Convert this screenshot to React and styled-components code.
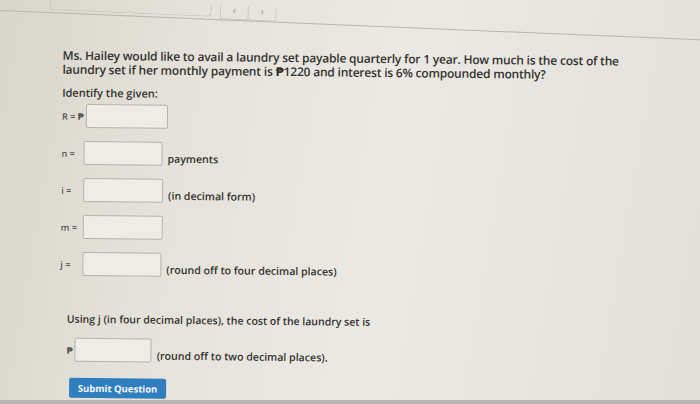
import React from 'react'
import styled, { createGlobalStyle } from 'styled-components'

const Global = createGlobalStyle`
    html, body {
        margin: 0;
        padding: 0;
        width: 700px;
        height: 404px;
        overflow: hidden;
    }
    body {
        font-family: "Open Sans", "DejaVu Sans", sans-serif;
        color: #34332f;
    }
`

const givens = [
    { label: 'R = ₱', width: 80, note: '' },
    { label: 'n =', width: 77, note: 'payments' },
    { label: 'i =', width: 78, note: '(in decimal form)' },
    { label: 'm =', width: 78, note: '' },
    { label: 'j =', width: 77, note: '(round off to four decimal places)' },
]

const App = () => {
    return (
        <Screen>
            <Global />
            <Toolbar>
                <SearchBox />
                <Pager>
                    <PagerButton>‹</PagerButton>
                    <PagerButton>›</PagerButton>
                </Pager>
            </Toolbar>
            <Question>
                <Prompt>
                    Ms. Hailey would like to avail a laundry set payable quarterly for 1 year. How much is the cost of the
                    laundry set if her monthly payment is ₱1220 and interest is 6% compounded monthly?
                </Prompt>
                <Heading>Identify the given:</Heading>
                <Givens>
                    {givens.map(g => (
                        <Row key={g.label}>
                            <Label $wide>{g.label}</Label>
                            <Field style={{ width: g.width }} />
                            {g.note && <Note>{g.note}</Note>}
                        </Row>
                    ))}
                </Givens>
                <Answer>
                    <Sentence>Using j (in four decimal places), the cost of the laundry set is</Sentence>
                    <Row>
                        <Label>₱</Label>
                        <Field style={{ width: 75 }} />
                        <Note>(round off to two decimal places).</Note>
                    </Row>
                    <Submit>Submit Question</Submit>
                </Answer>
            </Question>
            <Bezel />
        </Screen>
    )
}

const Screen = styled.div`
    position: relative;
    width: 700px;
    height: 404px;
    overflow: hidden;
    display: flex;
    flex-direction: column;
    background: linear-gradient(100deg, #d8d5cb 0%, #e4e2da 25%, #ebe9e3 55%, #e2e0da 100%);
`
const Toolbar = styled.div`
    display: flex;
    gap: 8px;
    height: 14px;
    padding: 0 0 0 50px;
    border-bottom: 1px solid #b8b6ae;
    transform-origin: left top;
    transform: rotate(2.4deg) translateY(-4px);
    width: 720px;
`
const SearchBox = styled.div`
    width: 160px;
    height: 11px;
    border: 1px solid #c9c7c0;
    border-top: none;
    border-radius: 0 0 4px 4px;
`
const Pager = styled.div`
    display: flex;
    border: 1px solid #c9c7c0;
    border-top: none;
    border-radius: 0 0 3px 3px;
    height: 13px;
`
const PagerButton = styled.span`
    width: 27px;
    text-align: center;
    font-size: 11px;
    line-height: 8px;
    color: #9a9893;
    & + & {
        border-left: 1px solid #c9c7c0;
    }
`
const Question = styled.div`
    padding: 33px 0 0 63px;
    transform-origin: left top;
    transform: rotate(0.6deg);
`
const Prompt = styled.p`
    margin: 0;
    width: 600px;
    font-size: 12px;
    font-weight: 600;
    line-height: 14px;
    letter-spacing: -0.2px;
`
const Heading = styled.p`
    margin: 8px 0 0;
    font-size: 11px;
    font-weight: 600;
`
const Givens = styled.div`
    display: flex;
    flex-direction: column;
    gap: 13px;
    margin-top: 4px;
`
const Row = styled.div`
    display: flex;
    align-items: flex-start;
    height: 24px;
`
const Label = styled.span`
    font-size: 9px;
    font-weight: 600;
    color: #55534f;
    margin-top: 6px;
    margin-right: 2px;
    min-width: ${p => (p.$wide ? '20px' : '0')};
`
const Field = styled.div`
    height: 22px;
    background: #edece7;
    border: 1px solid #b5b3ad;
    border-radius: 2px;
`
const Note = styled.span`
    font-size: 10.6px;
    font-weight: 600;
    margin: 10px 0 0 5px;
`
const Answer = styled.div`
    display: flex;
    flex-direction: column;
    align-items: flex-start;
    margin: 36px 0 0 7px;
    gap: 12px;
`
const Sentence = styled.p`
    margin: 0;
    font-size: 10.5px;
    font-weight: 600;
`
const Submit = styled.button`
    margin: 4px 0 0 3px;
    width: 97px;
    height: 20px;
    border: none;
    border-radius: 2px;
    background: #2f7fbe;
    color: #f3f6f8;
    font-family: "Open Sans", sans-serif;
    font-size: 9.5px;
    font-weight: 700;
    padding: 0;
`
const Bezel = styled.div`
    position: absolute;
    left: 0;
    right: 0;
    bottom: 0;
    height: 4px;
    background: #b7b6b2;
`

export default App
